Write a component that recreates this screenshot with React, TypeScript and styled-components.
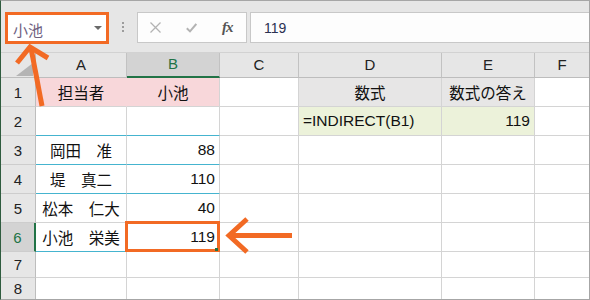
import React from 'react';
import styled, { createGlobalStyle } from 'styled-components';

const ORANGE = '#f26a24';
const GRID = '#d4d4d4';
const TEAL = '#45b4cf';
const GREEN = '#217346';
const HEAD_BG = '#e6e6e6';
const HEAD_SEL = '#d3d3d3';

const GlobalStyle = createGlobalStyle`
  html, body {
    margin: 0;
    padding: 0;
    background: #fff;
  }
  body {
    font-family: "Liberation Sans", "Noto Sans CJK JP", sans-serif;
  }
`;

const Window = styled.div`
  position: relative;
  width: 590px;
  height: 300px;
  box-sizing: border-box;
  display: flex;
  flex-direction: column;
  border: 1px solid #a6a6a6;
  border-left-color: #2f5c3f;
  overflow: hidden;
  background: #fff;
`;

const FormulaBar = styled.div`
  flex: 0 0 52px;
  box-sizing: border-box;
  display: flex;
  align-items: flex-start;
  padding: 11px 0 0 4px;
  background: ${HEAD_BG};
  border-bottom: 1px solid #d2d2d2;
`;

const NameBox = styled.div`
  width: 104px;
  height: 32px;
  box-sizing: border-box;
  display: flex;
  align-items: center;
  justify-content: space-between;
  padding: 3px 4px 0 5px;
  border: 3px solid ${ORANGE};
  background: #fff;
  font-size: 15px;
  color: #6e607f;
`;

const DropArrow = styled.span`
  width: 0;
  height: 0;
  margin-top: -3px;
  border-left: 4px solid transparent;
  border-right: 4px solid transparent;
  border-top: 4px solid #6a6a6a;
`;

const Grip = styled.div`
  display: flex;
  flex-direction: column;
  gap: 2px;
  margin: 10px 0 0 13px;
`;

const GripDot = styled.span`
  width: 2px;
  height: 2px;
  background: #9c9c9c;
`;

const FxButtons = styled.div`
  width: 110px;
  height: 31px;
  box-sizing: border-box;
  display: flex;
  align-items: center;
  gap: 25px;
  margin-left: 13px;
  padding-left: 12px;
  border: 1px solid #c8c8c8;
  background: #fdfdfd;
`;

const Fx = styled.span`
  font-family: "Liberation Serif", serif;
  font-style: italic;
  font-weight: bold;
  font-size: 15px;
  letter-spacing: -1px;
  color: #555;
`;

const FormulaInput = styled.div`
  flex: 1;
  height: 31px;
  box-sizing: border-box;
  display: flex;
  align-items: center;
  margin-left: 3px;
  padding-left: 13px;
  border: 1px solid #c8c8c8;
  border-right: none;
  background: #fdfdfd;
  font-size: 14px;
  color: #2b3152;
`;

const Sheet = styled.div`
  flex: 1;
  display: grid;
  grid-template-columns: 35px 91px 93px 79px 143px 93px 1fr;
  grid-template-rows: 25px repeat(6, 29px) 26px 1fr;

  & > :nth-last-child(-n + 7) {
    border-bottom: none;
  }
  & > :nth-child(7n) {
    border-right: none;
  }
`;

const Corner = styled.div`
  box-sizing: border-box;
  display: flex;
  align-items: flex-end;
  justify-content: flex-end;
  padding: 0 2px 1px 0;
  background: ${HEAD_BG};
  border-right: 1px solid #bdbdbd;
  border-bottom: 1px solid #bdbdbd;

  &::after {
    content: '';
    width: 0;
    height: 0;
    border-left: 17px solid transparent;
    border-bottom: 13px solid #b4b4b4;
  }
`;

const ColHead = styled.div<{ $selected?: boolean }>`
  box-sizing: border-box;
  display: flex;
  align-items: center;
  justify-content: center;
  padding-bottom: 2px;
  background: ${p => (p.$selected ? HEAD_SEL : HEAD_BG)};
  border-right: 1px solid #c2c2c2;
  border-bottom: ${p => (p.$selected ? `2px solid ${GREEN}` : '1px solid #bdbdbd')};
  font-size: 15px;
  color: ${p => (p.$selected ? GREEN : '#222')};
`;

const RowHead = styled.div<{ $selected?: boolean }>`
  box-sizing: border-box;
  display: flex;
  align-items: center;
  justify-content: center;
  background: ${p => (p.$selected ? HEAD_SEL : HEAD_BG)};
  border-right: ${p => (p.$selected ? `2px solid ${GREEN}` : '1px solid #bdbdbd')};
  border-bottom: 1px solid #cdcdcd;
  font-size: 15px;
  color: ${p => (p.$selected ? GREEN : '#222')};
`;

type Align = 'left' | 'center' | 'right';

const Cell = styled.div<{ $bg?: string; $align?: Align; $bottom?: string; $right?: string; $marked?: boolean }>`
  position: ${p => (p.$marked ? 'relative' : 'static')};
  box-sizing: border-box;
  display: flex;
  align-items: center;
  justify-content: ${p => (p.$align === 'left' ? 'flex-start' : p.$align === 'right' ? 'flex-end' : 'center')};
  padding: 0 4px;
  background: ${p => p.$bg ?? '#fff'};
  border-right: 1px solid ${p => p.$right ?? GRID};
  border-bottom: 1px solid ${p => p.$bottom ?? GRID};
  font-size: 15.5px;
  color: #111;
  white-space: nowrap;

  ${p =>
    p.$marked &&
    `
    &::after {
      content: '';
      position: absolute;
      left: -2px;
      top: -2px;
      right: -1px;
      bottom: -1px;
      border: 3px solid ${ORANGE};
      z-index: 2;
    }
    &::before {
      content: '';
      position: absolute;
      right: 1px;
      bottom: 0;
      width: 3px;
      height: 3px;
      background: ${GREEN};
      z-index: 3;
    }
  `}
`;

const Overlay = styled.svg`
  position: absolute;
  left: -1px;
  top: -1px;
  pointer-events: none;
  z-index: 5;
`;

const PINK = '#f8d7da';
const GRAY = '#e7e6e6';
const LIME = '#ecf2da';

type CellSpec = {
  text?: string;
  bg?: string;
  align?: Align;
  bottom?: string;
  right?: string;
  marked?: boolean;
};

const rows: CellSpec[][] = [
  [
    { text: '担当者', bg: PINK, right: PINK },
    { text: '小池', bg: PINK },
    {},
    { text: '数式', bg: GRAY },
    { text: '数式の答え', bg: GRAY },
    {},
  ],
  [
    { bottom: TEAL },
    { bottom: TEAL },
    {},
    { text: '=INDIRECT(B1)', bg: LIME, align: 'left' },
    { text: '119', bg: LIME, align: 'right' },
    {},
  ],
  [{ text: '岡田　准', bottom: TEAL }, { text: '88', align: 'right', bottom: TEAL }, {}, {}, {}, {}],
  [{ text: '堤　真二', bottom: TEAL }, { text: '110', align: 'right', bottom: TEAL }, {}, {}, {}, {}],
  [{ text: '松本　仁大' }, { text: '40', align: 'right' }, {}, {}, {}, {}],
  [{ text: '小池　栄美', bottom: TEAL }, { text: '119', align: 'right', bottom: TEAL, marked: true }, {}, {}, {}, {}],
  [{}, {}, {}, {}, {}, {}],
  [{}, {}, {}, {}, {}, {}],
];

const columns = ['A', 'B', 'C', 'D', 'E', 'F'];

export default function App() {
  return (
    <>
      <GlobalStyle />
      <Window>
        <FormulaBar>
          <NameBox>
            <span>小池</span>
            <DropArrow />
          </NameBox>
          <Grip>
            <GripDot />
            <GripDot />
            <GripDot />
          </Grip>
          <FxButtons>
            <svg width="11" height="11" viewBox="0 0 11 11">
              <path d="M0.5 0.5 L10.5 10.5 M10.5 0.5 L0.5 10.5" stroke="#b3b3b3" strokeWidth="1.3" fill="none" />
            </svg>
            <svg width="11" height="10" viewBox="0 0 11 10">
              <path d="M0.8 5.2 L4 8.4 L10.3 1" stroke="#b3b3b3" strokeWidth="2" fill="none" />
            </svg>
            <Fx>fx</Fx>
          </FxButtons>
          <FormulaInput>119</FormulaInput>
        </FormulaBar>

        <Sheet>
          <Corner />
          {columns.map(c => (
            <ColHead key={c} $selected={c === 'B'}>
              {c}
            </ColHead>
          ))}
          {rows.map((row, i) => (
            <React.Fragment key={i}>
              <RowHead $selected={i === 5}>{i + 1}</RowHead>
              {row.map((cell, j) => (
                <Cell
                  key={j}
                  $bg={cell.bg}
                  $align={cell.align}
                  $bottom={cell.bottom}
                  $right={cell.right}
                  $marked={cell.marked}
                >
                  {cell.text}
                </Cell>
              ))}
            </React.Fragment>
          ))}
        </Sheet>

        <Overlay width={590} height={300} viewBox="0 0 590 300">
          <g fill="none" stroke={ORANGE} strokeWidth={5} strokeLinejoin="miter">
            <line x1={31} y1={48} x2={42} y2={106} />
            <polyline points="17,63 30,47 48,58" />
            <line x1={230} y1={235.5} x2={292} y2={235.5} />
            <polyline points="247,219 229,235.5 247,252" />
          </g>
        </Overlay>
      </Window>
    </>
  );
}
